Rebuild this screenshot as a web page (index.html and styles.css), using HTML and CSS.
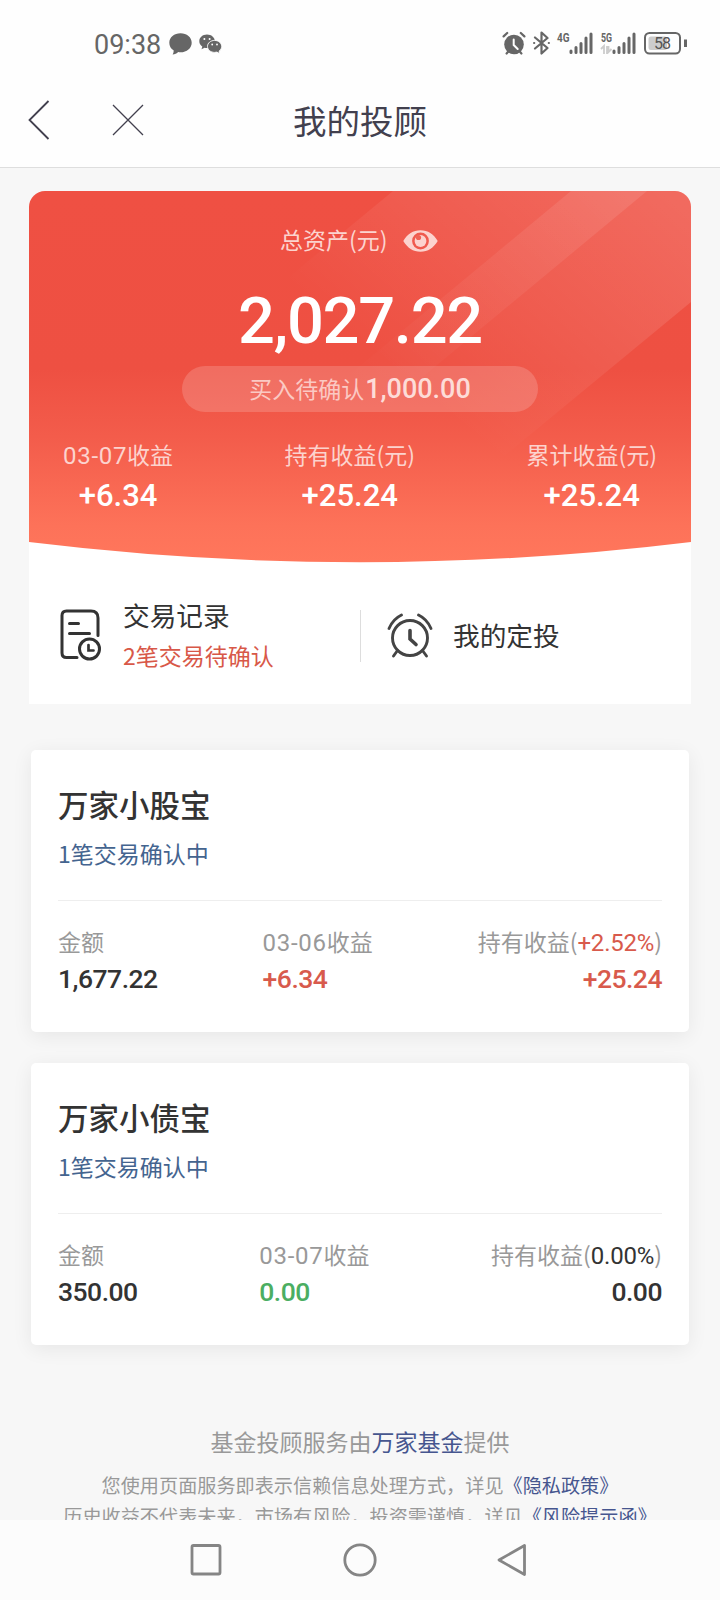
FILE: index.html
```html
<!DOCTYPE html>
<html lang="zh-CN">
<head>
<meta charset="utf-8">
<title>我的投顾</title>
<link rel="stylesheet" href="styles.css">
</head>
<body>
<div class="screen">
  <header class="top">
    <div class="status">
      <div class="status-left">
        <span class="time">09:38</span>
        <svg class="ic-bubble" width="23" height="22" viewBox="0 0 23 22"><path d="M11.5.3C5.2.3.3 4.300.3 9.700c0 3.300 1.600 5.900 4.300 7.600.2 1.500-.2 2.800-1 4.200 2.300-.2 4.200-1 5.600-2.400.7.100 1.500.2 2.300.2 6.300 0 11.200-4.200 11.200-9.600S17.800.3 11.500.3z" fill="#666"/></svg>
        <svg class="ic-wechat" width="23" height="20" viewBox="0 0 23 20"><path d="M8 .5C3.600.5.3 3.400.3 7.200c0 2.300 1.200 4.200 3 5.400L2.500 15.300l3.100-1.600c.8.200 1.600.3 2.400.3 4.400 0 7.800-3 7.800-6.800S12.400.5 8 .5z" fill="#666"/><path d="M15.600 6.400c-3.900 0-7.100 2.600-7.100 6s3.200 6 7.100 6c.8 0 1.600-.1 2.300-.3l3 1.600-.8-2.600c1.600-1.100 2.600-2.800 2.600-4.700 0-3.400-3.200-6-7.100-6z" fill="#666" stroke="#fff" stroke-width=".9"/><g fill="#fff"><circle cx="5.400" cy="5" r="1"/><circle cx="10.600" cy="5" r="1"/><circle cx="13.200" cy="10.500" r=".9"/><circle cx="18" cy="10.500" r=".9"/></g></svg>
      </div>
      <svg class="status-right" width="186" height="24" viewBox="0 0 186 24">
        <g fill="none" stroke="#666" stroke-linecap="round">
          <circle cx="12" cy="13.500" r="9.800" fill="#666" stroke="none"/>
          <path d="M1.600 5.400 5.200 2M22.400 5.400 18.800 2M4.600 22.500l2-2.400M19.400 22.500l-2-2.400" stroke-width="2.200"/>
          <path d="M11.700 8.500v5.500l4 4" stroke="#fff" stroke-width="2"/>
          <path d="M33 6.500 45.500 17 39.500 22.500V1.500L45.500 7 33 17.500" stroke-width="2.200" stroke-linejoin="round"/>
          <path d="M32 12h.3M46.700 12h.3" stroke-width="2"/>
          <path d="M69 21.500v-1.500M74 21.500v-5M79 21.500v-9M84 21.500V7M89 21.500V3M112 21.500v-1.500M117 21.500v-5M122 21.500v-9M127 21.500V7M132 21.500V3" stroke-width="3"/>
          <rect x="143" y="2" width="35" height="20.500" rx="4.500" stroke-width="2"/>
          <path d="M183.500 8.500v7.500" stroke-width="3" stroke-linecap="butt"/>
        </g>
        <rect x="146.500" y="5.500" width="18.500" height="13.500" rx="2.500" fill="#ccc"/>
        <path d="M99 18l3-3v8M105 15v8M106.500 15v6l3-3" fill="none" stroke="#ccc" stroke-width="1.800"/>
        <text class="net" x="55" y="10.500" textLength="12.500" lengthAdjust="spacingAndGlyphs">4G</text>
        <text class="net" x="99" y="10.500" textLength="11" lengthAdjust="spacingAndGlyphs">5G</text>
        <text class="batt" x="152" y="18" textLength="17">58</text>
      </svg>
    </div>
    <div class="nav">
      <svg class="nav-back" width="22" height="42" viewBox="0 0 22 42"><path d="M20.500 2 1.500 21l19 19" fill="none" stroke="#42404e" stroke-width="1.800"/></svg>
      <svg class="nav-close" width="32" height="32" viewBox="0 0 32 32"><path d="M1 1l30 30M31 1 1 31" fill="none" stroke="#42404e" stroke-width="1.300"/></svg>
      <h1 class="nav-title">我的投顾</h1>
    </div>
  </header>

  <main class="content">
    <section class="summary">
      <div class="hero">
        <svg class="hero-bg" width="662" height="372" viewBox="0 0 662 372">
          <defs>
            <linearGradient id="base" x1="0" y1="0" x2="0" y2="1"><stop offset="0" stop-color="#ef5043"/><stop offset=".48" stop-color="#ee5042"/><stop offset=".66" stop-color="#f35c4b"/><stop offset=".9" stop-color="#fd7259"/><stop offset="1" stop-color="#ff775c"/></linearGradient>
            <linearGradient id="wide" gradientUnits="userSpaceOnUse" x1="600" y1="-30" x2="400" y2="210"><stop offset="0" stop-color="#fff" stop-opacity=".15"/><stop offset=".55" stop-color="#fff" stop-opacity=".07"/><stop offset="1" stop-color="#fff" stop-opacity="0"/></linearGradient>
            <linearGradient id="beam" gradientUnits="userSpaceOnUse" x1="600" y1="0" x2="370" y2="240"><stop offset="0" stop-color="#fff" stop-opacity=".1"/><stop offset="1" stop-color="#fff" stop-opacity="0"/></linearGradient>
            <clipPath id="shape"><path d="M0 16A16 16 0 0 1 16 0H646A16 16 0 0 1 662 16V351Q331 391.500 0 351Z"/></clipPath>
          </defs>
          <g clip-path="url(#shape)">
            <path d="M0 0h662v372H0z" fill="url(#base)"/>
            <path d="M364 0H662V111L450 286H18z" fill="url(#wide)"/>
            <path d="M542 0h76L273 286h-76z" fill="url(#beam)"/>
          </g>
        </svg>
        <div class="asset-label"><span>总资产(元)</span>
          <svg width="35" height="22" viewBox="0 0 35 22"><path fill-rule="evenodd" d="M.3 11C4.500 4 10 .3 17.500.3S30.500 4 34.700 11C30.500 18 25 21.700 17.500 21.700S4.500 18 .3 11zM17.500 2.600a8.400 8.400 0 1 0 0 16.800 8.400 8.400 0 0 0 0-16.800z" fill="#fcd3ce"/><circle cx="17.500" cy="11" r="5.900" fill="#fcd3ce"/><circle cx="15.500" cy="7.500" r="2.600" fill="#f06256"/></svg>
        </div>
        <div class="asset-value">2,027.22</div>
        <div class="pending"><span>买入待确认</span><b>1,000.00</b></div>
        <div class="stats">
          <div class="stat"><span class="stat-label"><i class="date">03-07</i>收益</span><b>+6.34</b></div>
          <div class="stat"><span class="stat-label">持有收益(元)</span><b>+25.24</b></div>
          <div class="stat"><span class="stat-label">累计收益(元)</span><b>+25.24</b></div>
        </div>
      </div>
      <div class="actions">
        <div class="action action-records">
          <svg width="42" height="52" viewBox="0 0 42 52" fill="none" stroke="#333" stroke-width="3" stroke-linecap="round"><path d="M38 26.500V9q0-7-7-7H6.500Q2 2 2 6.500v37.500Q2 48.500 6.500 48.500H17M9.500 14.500h9M9.500 24.500h20"/><circle cx="29.500" cy="40" r="10"/><path d="M28.500 36v5.500h5" stroke-width="2.700"/></svg>
          <div class="action-text"><span class="action-title">交易记录</span><span class="action-note">2笔交易待确认</span></div>
        </div>
        <div class="action action-plan">
          <svg width="46" height="46" viewBox="0 0 46 46" fill="none" stroke="#444" stroke-width="2.900" stroke-linecap="round"><circle cx="23" cy="25" r="17.500"/><path d="M2 15.500Q6 6 14.500 2M44 15.500Q40 6 31.500 2M10.500 37.500 6.500 43M35.500 37.500l4 5.500"/><path d="M23 17.500V26l6 5.500" stroke-width="3.600"/></svg>
          <span class="action-title">我的定投</span>
        </div>
      </div>
    </section>

    <section class="fund">
      <h2>万家小股宝</h2>
      <p class="fund-note">1笔交易确认中</p>
      <div class="figures">
        <div class="figure"><span>金额</span><b>1,677.22</b></div>
        <div class="figure"><span><i class="date">03-06</i>收益</span><b class="up">+6.34</b></div>
        <div class="figure end"><span>持有收益(<i class="rate up">+2.52%</i>)</span><b class="up">+25.24</b></div>
      </div>
    </section>

    <section class="fund">
      <h2>万家小债宝</h2>
      <p class="fund-note">1笔交易确认中</p>
      <div class="figures">
        <div class="figure"><span>金额</span><b>350.00</b></div>
        <div class="figure"><span><i class="date">03-07</i>收益</span><b class="down">0.00</b></div>
        <div class="figure end"><span>持有收益(<i class="rate">0.00%</i>)</span><b>0.00</b></div>
      </div>
    </section>

    <footer class="legal">
      <p class="provider">基金投顾服务由<a>万家基金</a>提供</p>
      <p>您使用页面服务即表示信赖信息处理方式，详见<a>《隐私政策》</a></p>
      <p>历史收益不代表未来，市场有风险，投资需谨慎，详见<a>《风险提示函》</a></p>
    </footer>
  </main>

  <div class="sysbar">
    <svg width="32" height="34" viewBox="0 0 32 34"><rect x="2" y="2.500" width="28" height="28.500" rx="1.500" fill="none" stroke="#858585" stroke-width="2.800"/></svg>
    <svg width="34" height="34" viewBox="0 0 34 34"><circle cx="17" cy="17" r="15.200" fill="none" stroke="#858585" stroke-width="2.800"/></svg>
    <svg width="30" height="34" viewBox="0 0 30 34"><path d="M27.500 2.500v29L2 17z" fill="none" stroke="#858585" stroke-width="2.800" stroke-linejoin="round"/></svg>
  </div>
</div>
</body>
</html>
```

FILE: styles.css
```css
* { box-sizing: border-box; margin: 0; padding: 0; }
body { width: 720px; background: #f7f7f7; font-family: "Noto Sans CJK SC", sans-serif; color: #333; }
i { font-style: normal; }
b { font-weight: 500; }
svg { display: block; flex: none; }
.screen { width: 720px; height: 1600px; display: flex; flex-direction: column; overflow: hidden; }

.top { height: 168px; background: #fefefe; border-bottom: 1px solid #dedede; flex: none; }
.status { height: 86px; padding: 0 32px 0 94px; display: flex; justify-content: space-between; }
.status-left { display: flex; align-items: flex-start; }
.time { width: 75px; margin-top: 29px; font: 400 27px/32px Roboto, sans-serif; color: #666; white-space: nowrap; }
.ic-bubble { margin-top: 33px; }
.ic-wechat { margin: 34px 0 0 7px; }
.status-right { margin-top: 31px; }
.net { font: 700 13px Roboto, sans-serif; fill: #666; }
.batt { font: 400 16px Roboto, sans-serif; fill: #555; }
.nav { height: 81px; display: grid; grid-template-columns: 84px 152px 192px; padding-left: 28px; }
.nav-back { margin-top: 13px; }
.nav-close { margin-top: 18px; }
.nav-title { text-align: center; font-size: 33.500px; font-weight: 400; line-height: 68px; color: #42404e; }

.content { flex: 1; min-height: 0; overflow: hidden; padding-top: 23px; }
.summary { width: 662px; margin-left: 29px; height: 513px; background: #fff; border-radius: 16px 16px 0 0; }
.hero { height: 372px; display: grid; grid-template-rows: 97px 78px 45px 152px; }
.hero > * { grid-column: 1; }
.hero-bg { grid-row: 1 / -1; }
.asset-label { grid-row: 1; z-index: 1; display: flex; gap: 15px; padding: 31px 0 0 251px; font-size: 23px; line-height: 34px; color: #fcd3ce; }
.asset-label svg { margin-top: 8px; }
.asset-value { grid-row: 2; z-index: 1; text-align: center; font: 500 65px/66px Roboto, sans-serif; letter-spacing: -1.300px; color: #fff; }
.pending { grid-row: 3; z-index: 1; justify-self: center; width: 356px; height: 46px; border-radius: 23px; background: rgba(255,255,255,.17); display: flex; justify-content: center; align-items: center; font-size: 23px; color: #fbc9c3; }
.pending span { margin-top: -2px; }
.pending b { font: 500 27px/46px Roboto, sans-serif; color: #fddcd8; margin-left: 1px; }
.stats { grid-row: 4; z-index: 1; display: flex; justify-content: space-between; padding: 26px 34px 0; }
.stat { display: flex; flex-direction: column; align-items: center; }
.stat-label { height: 34px; font-size: 23px; line-height: 34px; color: #fcd3ce; }
.stat b { font: 500 31px/38px Roboto, sans-serif; margin-top: 6px; color: #fff; }
.date { font: 400 24px/1 Roboto, sans-serif; letter-spacing: .700px; }

.actions { height: 141px; display: flex; }
.action { display: flex; }
.action-records { width: 331px; padding: 46px 0 0 31px; }
.action-text { display: flex; flex-direction: column; margin: -14px 0 0 21px; }
.action-title { font-size: 26.700px; line-height: 40px; }
.action-note { font-size: 23px; line-height: 34px; margin-top: 3px; color: #d85848; }
.action-plan { position: relative; padding: 50px 0 0 27px; }
.action-plan::before { content: ""; position: absolute; left: 0; top: 47px; width: 1px; height: 52px; background: #ddd; }
.action-plan .action-title { margin: 2px 0 0 20px; }

.fund { width: 658px; height: 282px; margin: 46px 0 0 31px; padding: 32px 27px 0; background: #fff; border-radius: 5px; box-shadow: 0 4px 20px rgba(0,0,0,.07); }
.fund + .fund { margin-top: 31px; }
.fund h2 { font-size: 30.500px; line-height: 44px; font-weight: 500; }
.fund-note { font-size: 23px; line-height: 34px; margin-top: 10px; color: #44648f; }
.figures { display: flex; justify-content: space-between; margin-top: 30px; padding-top: 23px; border-top: 1px solid #eee; }
.figure { display: flex; flex-direction: column; }
.figure span { height: 34px; font-size: 23px; line-height: 34px; color: #999; white-space: nowrap; }
.figure b { font: 500 26.500px/34px Roboto, sans-serif; letter-spacing: -.500px; margin-top: 4px; }
.end { align-items: flex-end; }
.rate { font: 400 24px/1 Roboto, sans-serif; letter-spacing: -.200px; color: #333; }
.figure .up { color: #d85a4c; }
.figure .down { color: #4bae62; }

.legal { margin-top: 79px; text-align: center; font-size: 19.150px; line-height: 31px; color: #999; white-space: nowrap; }
.provider { font-size: 23px; line-height: 34px; margin-bottom: 12px; }
.legal a { color: #46568f; }

.sysbar { height: 80px; flex: none; background: #fcfcfc; display: flex; justify-content: space-between; align-items: center; padding: 0 193px 0 190px; }
```
